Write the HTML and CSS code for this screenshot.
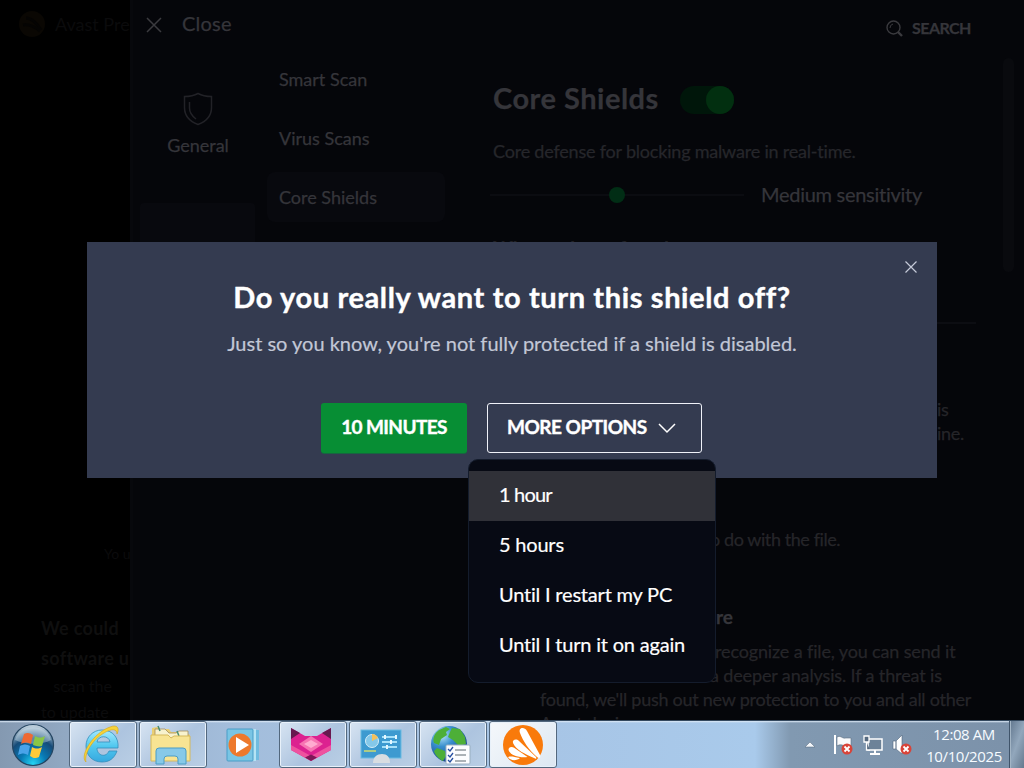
FILE: index.html
```
<!DOCTYPE html>
<html lang="en">
<head>
<meta charset="utf-8">
<title>Core Shields</title>
<link rel="stylesheet" href="styles.css">
</head>
<body>
<div class="screen">
  <main class="app">
    <aside class="backdrop">
      <div class="brand">
        <svg width="28" height="28" viewBox="0 0 28 28"><circle cx="14" cy="14" r="13" fill="#0a0703"/><path d="M8 8c5 0 11 5 15 12M5 15c5-1 11 1 17 6" stroke="#050403" stroke-width="3" fill="none"/></svg>
        <span>Avast Pre</span>
      </div>
      <p class="faint-link">Yo u</p>
      <p class="faint-title">We could<br>software u</p>
      <p class="faint-copy">&nbsp; &nbsp;scan the<br>to update</p>
    </aside>
    <section class="panel">
      <nav class="sections">
        <div class="close-row">
          <svg width="16" height="16" viewBox="0 0 16 16"><path d="M1 1l14 14M15 1L1 15" stroke="#3b3b3f" stroke-width="1.5"/></svg>
          <span class="close-label">Close</span>
        </div>
        <div class="section-item">
          <svg width="32" height="34" viewBox="0 0 32 34" fill="none" stroke="#222227" stroke-width="1.5"><path d="M16 1.500c-4 2.200-9 3-13.500 3v11c0 8 5.500 14 13.500 17 8-3 13.500-9 13.500-17v-11c-4.500 0-9.500-.8-13.500-3z"/><path d="M7.500 10v6c0 5 2.500 8 6.500 11"/></svg>
          <span class="section-label">General</span>
        </div>
        <div class="section-active"></div>
      </nav>
      <nav class="pages">
        <a class="page">Smart Scan</a>
        <a class="page">Virus Scans</a>
        <a class="page current">Core Shields</a>
      </nav>
      <div class="content">
        <div class="search">
          <svg width="17" height="17" viewBox="0 0 17 17" fill="none" stroke="#3a3a3e"><circle cx="7.500" cy="7.500" r="6.500" stroke-width="1.400"/><path d="M12 12l4 4" stroke-width="2.400"/><path d="M4 8a4 4 0 0 1 3-4"/></svg>
          <span>SEARCH</span>
        </div>
        <div class="heading"><h1>Core Shields</h1><span class="toggle"><i class="knob"></i></span></div>
        <p class="description">Core defense for blocking malware in real-time.</p>
        <div class="sensitivity"><div class="track"><i class="thumb"></i></div><span class="level">Medium sensitivity</span></div>
        <h2 class="when">When a threat found</h2>
        <div class="rule"></div>
        <div class="copy auto"><span>is</span><br><span>ine.</span></div>
        <p class="copy ask">o do with the file.</p>
        <h3 class="unknown">re</h3>
        <p class="copy cloud"><span class="send">recognize a file, you can send it</span><span class="deeper">a deeper analysis. If a threat is</span><span>found, we'll push out new protection to you and all other</span><span>Avast devices.</span></p>
      </div>
      <div class="scroll"></div>
    </section>
    <section class="dialog">
      <svg class="dismiss" width="12" height="12" viewBox="0 0 12 12"><path d="M.5.5l11 11M11.500.5l-11 11" stroke="#c5cad8" stroke-width="1.200"/></svg>
      <h2 class="question">Do you really want to turn this shield off?</h2>
      <p class="warning">Just so you know, you're not fully protected if a shield is disabled.</p>
      <div class="actions">
        <button class="btn primary">10 MINUTES</button>
        <button class="btn outline"><span>MORE OPTIONS</span><svg width="18" height="11" viewBox="0 0 18 11"><path d="M1 1l8 8 8-8" fill="none" stroke="#fff" stroke-width="1.500"/></svg></button>
      </div>
      <div class="menu">
        <div class="option hover">1 hour</div>
        <div class="option">5 hours</div>
        <div class="option">Until I restart my PC</div>
        <div class="option">Until I turn it on again</div>
      </div>
    </section>
  </main>
  <footer class="taskbar">
    <div class="start">
      <svg width="44" height="44" viewBox="0 0 44 44"><defs><radialGradient id="orb" cx=".5" cy=".95" r=".9"><stop offset="0" stop-color="#24d3f2"/><stop offset=".35" stop-color="#0879b4"/><stop offset=".68" stop-color="#164b78"/><stop offset="1" stop-color="#b8cbd9"/></radialGradient></defs><circle cx="22" cy="22" r="20.500" fill="url(#orb)" stroke="#244561" stroke-width="1.200"/><path d="M4 17C8 0 36 0 40 17c-9 5-25 5-36 0z" fill="#e5f4fa" opacity=".35"/><path d="M13 11c4-2 6-1 9 1l-2 9c-3-2-6-2-10 0z" fill="#ef6932"/><path d="M24 13c4 2 6 2 10 0l-3 10c-3 1-6 0-9-1z" fill="#8ac646"/><path d="M9 23c4-2 7-2 10 0l-2 9c-3-2-6-2-10 0z" fill="#49a3e9"/><path d="M21 24c4 2 6 2 10 0l-3 10c-4 2-6 1-9-1z" fill="#ffca38"/></svg>
    </div>
    <div class="task open">
      <svg width="42" height="40" viewBox="0 0 42 40"><defs><linearGradient id="ie" x2="0" y2="1"><stop stop-color="#a6eaff"/><stop offset=".5" stop-color="#51c8ef"/><stop offset="1" stop-color="#36a8df"/></linearGradient></defs><path d="M38 23H17c0 8 9 10 12 3h8c-3 8-8 11-15 11C12 37 6 30 6 21 6 12 13 5 22 5c11 0 17 8 16 18zm-21-6h13c-1-7-12-7-13 0z" fill="url(#ie)" stroke="#328ebb" stroke-width=".8"/><path d="M6 37C-1 31 13 8 30 2c7-3 10 1 7 7 0-5-5-6-13-1C12 15 4 29 6 37z" fill="#f6d238" stroke="#d4a41d" stroke-width=".6"/></svg>
    </div>
    <div class="task open">
      <svg width="42" height="40" viewBox="0 0 42 40"><path d="M2 8V3l5-1 3 2h9l2 3h14l5 3v22H2z" fill="#e9cf74"/><path d="M5 4h10l4 4h7l3-2h9v7H5z" fill="#f8f2ce" stroke="#a58d5d" stroke-width=".8"/><path d="M8 1l2 5M27 6l2 5" stroke="#478d70" stroke-width="1.500"/><path d="M1 10h17l3 3 3-2h16v25H1z" fill="#f8e493" stroke="#d5b95c"/><path d="M6 39V26q0-3 3-3h24q3 0 3 3v13h-8v-5q0-3-3-3h-8q-3 0-3 3v5z" fill="#87c9e8" stroke="#4b9dc6"/></svg>
    </div>
    <div class="task">
      <svg width="34" height="36" viewBox="0 0 34 36"><rect x="7" y="3" width="26" height="30" fill="#70bce0"/><rect x="4" y="2" width="26" height="32" fill="#b5e4f4"/><rect x="1" y="2" width="26" height="32" rx="1" fill="#79c5e4" stroke="#4a9dc7"/><circle cx="14" cy="18" r="11.500" fill="#ed792c"/><path d="M10 10l13 8-13 8z" fill="#fff"/></svg>
    </div>
    <div class="task open">
      <svg width="42" height="36" viewBox="0 0 42 36"><path d="M1 1l14 8h12L41 1v22L21 34 1 23z" fill="#dc2190"/><path d="M1 1l9 5-9 6zM41 1l-9 5 9 6z" fill="#67194f"/><path d="M9 17l12-8 12 8-12 8z" fill="#f773b2"/><path d="M14 17l7-4 7 4-7 4z" fill="#ffabd0"/><path d="M1 18l20 11 20-11v5L21 34 1 23z" fill="#ee529f"/><path d="M15 30.500l6-3 6 3-6 3.500z" fill="#7e1758"/></svg>
    </div>
    <div class="task open">
      <svg width="42" height="38" viewBox="0 0 42 38"><rect x="1" y="4" width="40" height="28" fill="#3d9ad0" stroke="#69bbe2"/><circle cx="12" cy="15" r="6.500" fill="#84c8e9" stroke="#d4edf8"/><path d="M12 15V8a7 7 0 0 1 6 4z" fill="#f4c15c"/><path d="M22 11h15M22 16h15M22 21h15" stroke="#a5e0f9" stroke-width="2"/><path d="M25 9v4M31 14v4M27 19v4M36 9v4" stroke="#e5f7ff" stroke-width="2"/><path d="M4 25h12" stroke="#aacb85" stroke-width="2"/><path d="M13 37c0-6 4-9 9-9s8 3 8 9z" fill="#d8dde1"/></svg>
    </div>
    <div class="task open">
      <svg width="42" height="40" viewBox="0 0 42 40"><defs><radialGradient id="globe" cx=".3" cy=".25" r=".8"><stop stop-color="#bde9fb"/><stop offset=".4" stop-color="#398fcd"/><stop offset="1" stop-color="#123b89"/></radialGradient></defs><circle cx="19" cy="19" r="18" fill="url(#globe)"/><path d="M9 5l7-3 4 2-4 3 1 3-6 4-2 6-5-2c-2-5 1-10 5-13zM22 3l8 1 5 8 1 7-7 2-6-6-5-3 2-5zM7 23l8 3 1 5-3 5c-4-2-8-6-9-10z" fill="#4daf37"/><rect x="16" y="20" width="24" height="19" rx="1" fill="#fcfdff" stroke="#9aafc0"/><path d="M18 24l2 2 3-4M18 30l2 2 3-4M18 35l2 2 3-4" fill="none" stroke="#264fa1" stroke-width="1.300"/><path d="M25 25h11M25 30h11M25 36h11" stroke="#5c6870"/></svg>
    </div>
    <div class="task open active">
      <svg width="42" height="42" viewBox="0 0 42 42"><circle cx="21" cy="21" r="20" fill="#f97a0b"/><path d="M18 9c-2-5 4-7 7-2l13 24c1 3-1 4-3 2C27 26 21 17 18 9z" fill="#fff"/><path d="M11 19c-1-3 3-5 6-2l17 16c1 2 0 2-2 1C23 30 14 26 11 19z" fill="#fff"/><path d="M6.500 26c0-3 3-4 6-2l13 9c-7 1-17-1-19-7z" fill="#fff"/><path d="M6 33c3-1 6 0 12 1-3 3-10 3-12-1z" fill="#fff"/></svg>
    </div>
    <div class="tray">
      <svg width="10" height="6" viewBox="0 0 10 6"><path d="M5 0l5 5H0z" fill="#f4f7fb" stroke="#526579" stroke-width=".5"/></svg>
      <svg class="flag" width="20" height="22" viewBox="0 0 20 22"><path d="M2 1v19" stroke="#fff" stroke-width="2"/><path d="M4 3c4-2 5 2 9 1h5v8h-6c-3-1-5-2-8 0z" fill="#f8fafc" stroke="#5f7082" stroke-width=".6"/><circle cx="14" cy="15" r="5.500" fill="#d94338"/><path d="M11.500 12.500l5 5m0-5l-5 5" stroke="#fff" stroke-width="1.800"/></svg>
      <svg class="net" width="21" height="22" viewBox="0 0 21 22"><rect x="6" y="5" width="14" height="11" fill="#6c8298" stroke="#fff" stroke-width="1.500"/><path d="M13 16v3M8 20h10" stroke="#fff" stroke-width="2"/><path d="M2 2h5v6H2zM4.500 8v8H8" fill="#54697f" stroke="#fff" stroke-width="1.300"/></svg>
      <svg class="vol" width="20" height="22" viewBox="0 0 20 22"><path d="M1 7h3v8H1zM4 7l6-6v19l-6-5z" fill="#fff" stroke="#52677c" stroke-width=".6"/><circle cx="14" cy="15" r="5.500" fill="#d94338"/><path d="M11.500 12.500l5 5m0-5l-5 5" stroke="#fff" stroke-width="1.800"/></svg>
      <div class="clock"><span>12:08 AM</span><span>10/10/2025</span></div>
    </div>
    <div class="show-desktop"></div>
  </footer>
</div>
</body>
</html>
```
FILE: styles.css
```
* { box-sizing: border-box; }
body { margin: 0; background: #000; font-family: Lato, "Open Sans", sans-serif; font-variant-ligatures: none; }
h1, h2, h3, p { margin: 0; }
svg { display: block; flex: none; }
.screen { width: 1024px; height: 768px; display: flex; flex-direction: column; overflow: hidden; }
.app { height: 720px; display: flex; position: relative; overflow: hidden; }

.backdrop { width: 130px; flex: none; overflow: hidden; white-space: nowrap; color: #0b0b0c; }
.brand { display: flex; align-items: center; gap: 9px; padding: 10px 0 0 18px; font-size: 18px; height: 38px; }
.faint-link { margin: 504px 0 0 104px; font-size: 14px; line-height: 24px; }
.faint-title { margin: 47px 0 0 41px; font-size: 18px; line-height: 30px; color: #0f0f0f; font-weight: 700; letter-spacing: .3px; }
.faint-copy { margin: 0 0 0 41px; font-size: 16px; line-height: 26px; }

.panel { width: 894px; height: 720px; flex: none; display: flex; background: #05060a; border-left: 3px solid #07080c; color: #35353a; white-space: nowrap; -webkit-text-stroke: .25px currentColor; }
.sections { width: 122px; flex: none; display: flex; flex-direction: column; }
.close-row { height: 48px; padding: 1px 0 0 13px; display: flex; align-items: center; gap: 20px; }
.close-label { font-size: 20px; letter-spacing: .2px; margin-top: -4px; }
.section-item { padding: 44px 0 0 8px; display: flex; flex-direction: column; align-items: center; }
.section-label { margin-top: 8px; font-size: 18px; line-height: 22px; }
.section-active { margin: 47px 0 0 7px; height: 70px; border-radius: 4px; background: #08090e; }
.pages { width: 190px; flex: none; padding: 54px 0 0 12px; display: flex; flex-direction: column; gap: 9px; }
.page { width: 178px; height: 50px; padding-left: 12px; line-height: 50px; font-size: 18px; border-radius: 8px; }
.current { background: #08090e; }
.content { width: 557px; flex: none; padding: 0 0 0 48px; }
.search { display: flex; align-items: center; gap: 9px; height: 56px; padding-left: 393px; font-size: 16px; font-weight: 700; letter-spacing: -.55px; }
.search span { margin-top: -2px; }
.heading { display: flex; align-items: center; gap: 21px; height: 86px; }
.heading h1 { width: 166px; font-size: 29px; line-height: 34px; letter-spacing: .5px; margin-top: -2px; }
.toggle { width: 54px; height: 28px; border-radius: 14px; background: #00160a; display: flex; justify-content: flex-end; margin-top: 2px; }
.knob { width: 28px; height: 28px; border-radius: 50%; background: #022f10; }
.description { font-size: 18px; line-height: 24px; margin-top: -3px; color: #26262b; letter-spacing: -.2px; }
.sensitivity { display: flex; align-items: center; gap: 17px; height: 64px; font-size: 20px; letter-spacing: -.28px; }
.level { margin-top: -2px; }
.track { width: 254px; height: 2px; margin-left: -3px; background: #0b0c11; display: flex; align-items: center; padding-left: 119px; }
.thumb { width: 16px; height: 16px; border-radius: 50%; background: #012d15; }
.when { font-size: 19px; line-height: 26px; margin-top: 8px; color: #202024; }
.rule { width: 483px; height: 2px; margin-top: 61px; background: #0c0d12; }
.copy { color: #252529; font-size: 18px; line-height: 24px; letter-spacing: -.26px; }
.auto { padding: 73px 0 0 444px; }
.ask { padding: 82px 0 0 217px; letter-spacing: -.42px; }
.unknown { padding: 52px 0 0 223px; font-size: 19px; line-height: 28px; }
.cloud { padding: 8px 0 0 47px; display: flex; flex-direction: column; align-items: flex-start; }
.send { padding-left: 175px; letter-spacing: -.14px; }
.deeper { padding-left: 170px; letter-spacing: -.13px; }
.scroll { width: 11px; height: 214px; margin: 58px 0 0 1px; border-radius: 6px; background: #090a0e; }

.dialog { position: absolute; left: 87px; top: 242px; width: 850px; height: 236px; padding-top: 38px; background: #343b50; color: #fff; text-align: center; white-space: nowrap; -webkit-text-stroke: .2px currentColor; }
.dismiss { position: absolute; right: 20px; top: 19px; }
.question { font-size: 29px; line-height: 34px; font-weight: 700; letter-spacing: .62px; -webkit-text-stroke-width: .4px; }
.warning { margin-top: 16px; font-size: 20px; line-height: 26px; color: #c2c7d6; }
.actions { display: flex; margin: 47px 0 0 234px; gap: 20px; }
.btn { height: 50px; padding: 0 0 3px; border-radius: 3px; font: 700 19px/24px Lato, sans-serif; color: #fff; letter-spacing: -.6px; -webkit-text-stroke-width: .4px; }
.primary { width: 146px; border: 0; background: #078e34; box-shadow: 0 1px #176640; }
.outline { width: 215px; border: 1px solid #eff1f8; background: transparent; display: flex; align-items: center; justify-content: flex-start; padding-left: 19px; gap: 11px; letter-spacing: -.5px; }
.outline svg { margin-top: 3px; }
.menu { position: absolute; left: 381px; top: 217px; width: 248px; height: 224px; padding-top: 11px; border: 1px solid #141c2c; border-radius: 10px; background: #070a14; text-align: left; }
.option { height: 50px; padding-left: 30px; font-size: 20px; line-height: 46px; letter-spacing: -.2px; }
.hover { background: #303138; letter-spacing: -.8px; }

.taskbar { height: 48px; display: flex; background: linear-gradient(#dce9f6 0, #dce9f600 2px), linear-gradient(90deg, #8499b1 0, #91a8c2 65px, #a3bddb 230px, #a7c5e6 550px, #a9caeb 755px, #8199b1 790px, #7c92aa 1005px); border-top: 1px solid #33485e; font-family: "Open Sans", sans-serif; }
.start { width: 69px; padding-left: 11px; display: flex; align-items: center; }
.task { width: 68px; height: 47px; margin-right: 2px; flex: none; display: flex; align-items: center; justify-content: center; }
.open { border: 1px solid #53687e; border-radius: 3px; background: linear-gradient(135deg, #d7e4f2, #adc4df 55%, #bacfe5); box-shadow: inset 0 0 0 1px #e8f1fa; padding-right: 5px; }
.active { background: linear-gradient(135deg, #f5f8fb, #dce7f2); padding-right: 0; }
.tray { margin-left: auto; width: 200px; display: flex; align-items: center; }
.flag { margin-left: 18px; }
.net { margin-left: 9px; }
.vol { margin-left: 9px; }
.clock { width: 86px; margin-left: 11px; display: flex; flex-direction: column; align-items: center; color: #f6fbff; font-size: 15px; letter-spacing: -.4px; line-height: 22px; padding-top: 1px; }
.show-desktop { width: 15px; margin-left: 4px; border-left: 1px solid #40546a; background: linear-gradient(110deg, #62778e, #92a7bc 50%, #65798e); box-shadow: inset 1px 0 #a3b5c5; }
```
